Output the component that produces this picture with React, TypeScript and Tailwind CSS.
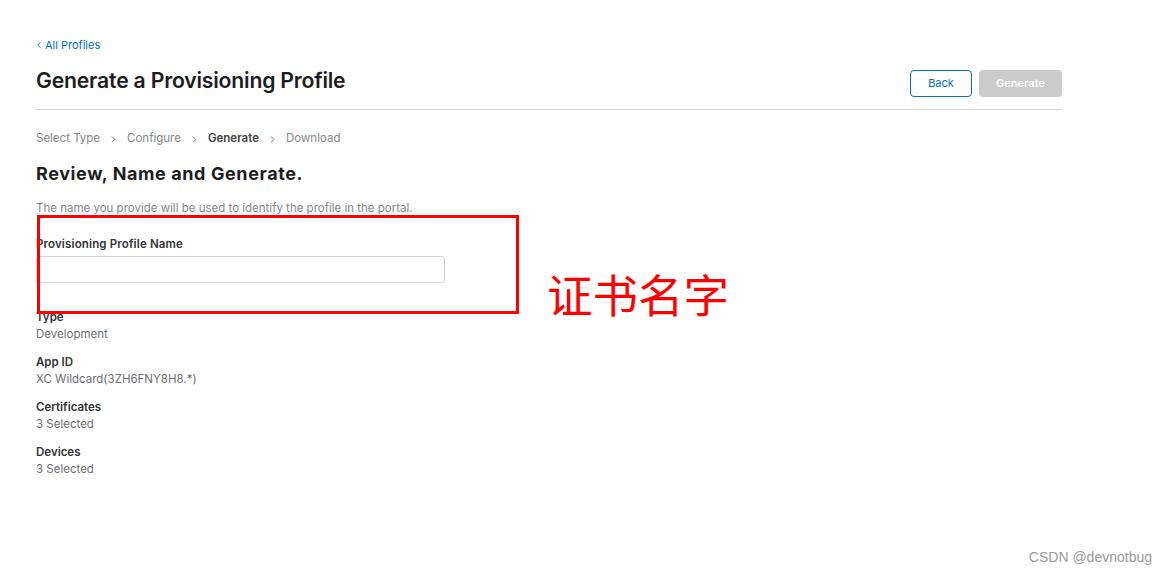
import { ChevronLeft, ChevronRight } from 'lucide-react'

const details = [
  { label: 'Type', value: 'Development' },
  { label: 'App ID', value: 'XC Wildcard(3ZH6FNY8H8.*)' },
  { label: 'Certificates', value: '3 Selected' },
  { label: 'Devices', value: '3 Selected' },
]

const steps = ['Select Type', 'Configure', 'Generate', 'Download']

export default function App() {
  return (
    <div className="relative w-[1167px] h-[575px] bg-white overflow-hidden font-['Inter',sans-serif] text-[#1d1d1f]">
      <div className="w-[1026px] ml-[36px] pt-[38px]">
        <a className="flex items-center text-[11px] leading-[14px] text-[#0070c9]">
          <ChevronLeft size={10} strokeWidth={2} className="-ml-[2px] mr-[1px]" />
          All Profiles
        </a>

        <div className="flex items-end justify-between mt-[15px] pb-[12px] border-b border-[#d6d6d6]">
          <h1 className="text-[21.2px] leading-[26px] font-semibold tracking-[-0.2px] mb-[4px]">
            Generate a Provisioning Profile
          </h1>
          <div className="flex gap-[7px]">
            <button className="w-[62px] h-[27px] rounded-[4px] border border-[#0070c9] text-[11px] text-[#0070c9]">
              Back
            </button>
            <button className="w-[83px] h-[27px] rounded-[4px] bg-[#cccccc] text-[11px] font-semibold text-white">
              Generate
            </button>
          </div>
        </div>

        {/* steps */}
        <div className="flex items-center mt-[20px] text-[11.5px] leading-[16px] text-[#86868b]">
          {steps.map((s, i) => (
            <div key={s} className="flex items-center">
              {i > 0 && <ChevronRight size={11} strokeWidth={2} className="mx-[8px] mt-[2px] text-[#6e6e73]" />}
              <span className={s === 'Generate' ? 'font-semibold text-[#424245]' : ''}>{s}</span>
            </div>
          ))}
        </div>

        <h2 className="mt-[16px] text-[18px] leading-[24px] font-bold tracking-[0.6px]">Review, Name and Generate.</h2>

        <p className="mt-[15px] text-[11.5px] leading-[14px] text-[#86868b]">
          The name you provide will be used to identify the profile in the portal.
        </p>

        <label className="block mt-[22px] text-[11.5px] leading-[14px] font-semibold tracking-[0.15px] text-[#333336]">
          Provisioning Profile Name
        </label>
        <input className="block mt-[5px] w-[409px] h-[27px] border border-[#d2d2d7] rounded-[3px] outline-none" />

        <div className="mt-[26px] flex flex-col gap-[11px]">
          {details.map(d => (
            <div key={d.label} className="text-[11.5px] leading-[17px]">
              <div className="font-semibold text-[#333336]">{d.label}</div>
              <div className="text-[#6e6e73]">{d.value}</div>
            </div>
          ))}
        </div>
      </div>

      {/* annotation */}
      <div className="absolute left-[37px] top-[215px] w-[482px] h-[99px] border-[3px] border-[#ff0000]" />
      <div className="absolute left-[547px] top-[265px] text-[45.5px] leading-[56px] text-[#ff0000] font-['Noto_Sans_CJK_SC',sans-serif]">
        证书名字
      </div>

      <div className="absolute right-[15px] top-[549px] text-[14px] leading-[16px] text-[#9a9a9a] font-['Liberation_Sans',sans-serif]">
        CSDN @devnotbug
      </div>
    </div>
  )
}
